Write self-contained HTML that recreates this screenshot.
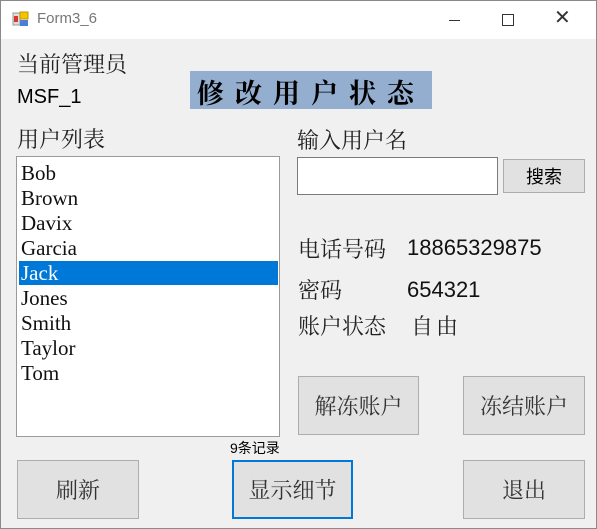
<!DOCTYPE html>
<html><head><meta charset="utf-8"><style>
body{margin:0;width:597px;height:529px;overflow:hidden;background:#fff;font-family:"Liberation Sans","Noto Sans CJK SC",sans-serif}
.win{position:absolute;left:0;top:0;width:595px;height:527px;border:1px solid #8a8a8a;background:#f0f0f0}
.title{position:absolute;left:0;top:0;width:595px;height:38px;background:#fff}
.a{position:absolute;white-space:nowrap}
.serif{font-family:"Noto Serif CJK SC","Liberation Serif",serif;color:#222}
.btn{position:absolute;background:#e1e1e1;border:1px solid #adadad;box-sizing:border-box;display:flex;align-items:center;justify-content:center;font-family:"Noto Serif CJK SC","Liberation Serif",serif;font-size:22px;color:#333}
.li{position:absolute;left:20px;font-family:"Liberation Serif",serif;font-size:21px;color:#111}
</style></head><body>
<div class="win">
<div class="title">
 <svg class="a" style="left:11px;top:10px" width="18" height="18" viewBox="0 0 18 18"><rect x="1" y="2" width="7" height="12" fill="#ddd" stroke="#999"/><rect x="2" y="5" width="4" height="6" fill="#d33"/><rect x="8" y="1" width="8" height="7" fill="#f5c400" stroke="#b90"/><rect x="8" y="9" width="8" height="6" fill="#4a7ed8"/></svg>
 <div class="a" style="left:36px;top:9px;font-size:15px;color:#777">Form3_6</div>
 <div class="a" style="left:448px;top:19px;width:11px;height:1px;background:#333"></div>
 <div class="a" style="left:501px;top:13px;width:10px;height:10px;border:1px solid #333"></div>
 <div class="a" style="left:553px;top:4px;font-size:20px;color:#333">✕</div>
</div>
<div class="a serif" style="left:16px;top:47px;font-size:22px">当前管理员</div>
<div class="a" style="left:16px;top:85px;font-size:20px;color:#000">MSF_1</div>
<div class="a" style="left:189px;top:70px;width:242px;height:38px;background:#93aecf"></div>
<div class="a" style="left:196px;top:71px;font-size:27px;font-weight:bold;letter-spacing:11px;font-family:'Noto Serif CJK SC',serif;color:#000">修改用户状态</div>
<div class="a serif" style="left:16px;top:122px;font-size:22px">用户列表</div>
<div class="a" style="left:15px;top:155px;width:264px;height:281px;background:#fff;border:1px solid #9a9a9a;box-sizing:border-box"></div>
<div class="a" style="left:18px;top:260px;width:259px;height:24px;background:#0078d7"></div>
<div class="li" style="top:160px">Bob</div>
<div class="li" style="top:185px">Brown</div>
<div class="li" style="top:210px">Davix</div>
<div class="li" style="top:235px">Garcia</div>
<div class="li" style="top:260px;color:#fff">Jack</div>
<div class="li" style="top:285px">Jones</div>
<div class="li" style="top:310px">Smith</div>
<div class="li" style="top:335px">Taylor</div>
<div class="li" style="top:360px">Tom</div>
<div class="a serif" style="left:296px;top:123px;font-size:22px">输入用户名</div>
<div class="a" style="left:296px;top:156px;width:201px;height:38px;background:#fff;border:1px solid #7a7a7a;box-sizing:border-box"></div>
<div class="btn" style="left:502px;top:158px;width:82px;height:34px;font-family:'Liberation Sans','Noto Sans CJK SC',sans-serif;font-size:18px;color:#000">搜索</div>
<div class="a serif" style="left:297px;top:232px;font-size:22px">电话号码</div>
<div class="a" style="left:406px;top:234px;font-size:22px;color:#111">18865329875</div>
<div class="a serif" style="left:297px;top:273px;font-size:22px">密码</div>
<div class="a" style="left:406px;top:276px;font-size:22px;color:#111">654321</div>
<div class="a serif" style="left:297px;top:309px;font-size:22px">账户状态</div>
<div class="a serif" style="left:410px;top:309px;font-size:22px;letter-spacing:3px">自由</div>
<div class="btn" style="left:297px;top:375px;width:121px;height:59px">解冻账户</div>
<div class="btn" style="left:462px;top:375px;width:122px;height:59px">冻结账户</div>
<div class="a" style="left:229px;top:437px;font-size:14px;color:#000">9条记录</div>
<div class="btn" style="left:16px;top:459px;width:122px;height:59px">刷新</div>
<div class="btn" style="left:231px;top:459px;width:121px;height:59px;border:2px solid #0078d7">显示细节</div>
<div class="btn" style="left:462px;top:459px;width:122px;height:59px">退出</div>
</div>
</body></html>
